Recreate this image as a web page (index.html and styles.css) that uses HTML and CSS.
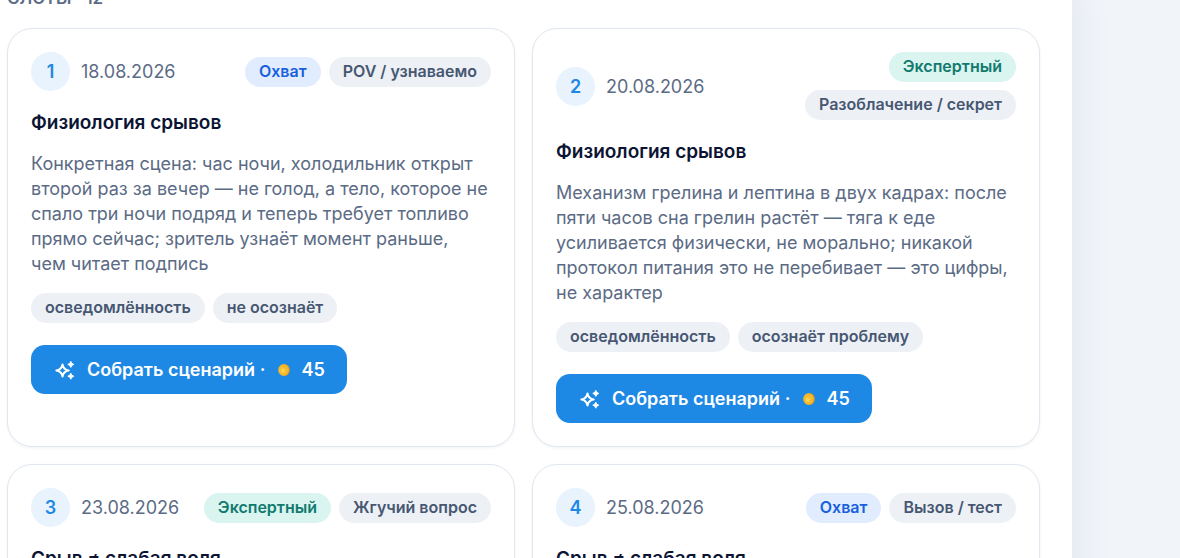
FILE: index.html
```html
<!DOCTYPE html>
<html lang="ru">
<head>
<meta charset="utf-8">
<meta name="viewport" content="width=device-width, initial-scale=1">
<title>Слоты</title>
<link rel="stylesheet" href="styles.css">
</head>
<body>
<svg class="sprite" aria-hidden="true">
  <symbol id="sparkles" viewBox="0 0 20 20">
    <path d="M7.5 4.6 Q8.4 9.6 13.6 10.5 Q8.4 11.4 7.5 16.4 Q6.6 11.4 1.4 10.5 Q6.6 9.6 7.5 4.6Z" fill="none" stroke="currentColor" stroke-width="2.2" stroke-linejoin="round"/>
    <path d="M15.8 1.4 L16.8 3.4 L18.8 4.4 L16.8 5.4 L15.8 7.4 L14.8 5.4 L12.8 4.4 L14.8 3.4Z M15.8 13.2 L16.8 15.2 L18.8 16.2 L16.8 17.2 L15.8 19.2 L14.8 17.2 L12.8 16.2 L14.8 15.2Z" fill="currentColor" stroke="currentColor" stroke-width="1" stroke-linejoin="round"/>
  </symbol>
  <symbol id="coin" viewBox="0 0 12 12">
    <ellipse cx="6.4" cy="6" rx="5.4" ry="6" fill="#e39a1b"/>
    <ellipse cx="5.4" cy="6" rx="5.2" ry="5.8" fill="#f5b92d"/>
    <path d="M5 2.8 L6 5 L8.2 5.6 L6.6 7.2 L6.8 9.4 L4.8 8.4 L2.8 9 L3.2 6.8 L2 5.2 L4.2 4.8Z" fill="#fbd04d"/>
  </symbol>
</svg>
<main class="panel">
  <h2 class="heading">СЛОТЫ · 12</h2>
  <div class="slots">
    <article class="card">
      <header class="card-head">
        <span class="number">1</span>
        <time class="date" datetime="2026-08-18">18.08.2026</time>
        <div class="tags tags-end"><span class="tag tag-blue">Охват</span><span class="tag">POV / узнаваемо</span></div>
      </header>
      <h3 class="title">Физиология срывов</h3>
      <p class="text">Конкретная сцена: час ночи, холодильник открыт второй раз за вечер — не голод, а тело, которое не спало три ночи подряд и теперь требует топливо прямо сейчас; зритель узнаёт момент раньше, чем&nbsp;читает подпись</p>
      <div class="tags"><span class="tag">осведомлённость</span><span class="tag">не осознаёт</span></div>
      <button class="build" type="button"><svg class="sparkles"><use href="#sparkles"/></svg><span>Собрать сценарий ·</span><svg class="coin"><use href="#coin"/></svg><span>45</span></button>
    </article>
    <article class="card">
      <header class="card-head">
        <span class="number">2</span>
        <time class="date" datetime="2026-08-20">20.08.2026</time>
        <div class="tags tags-end"><span class="tag tag-green">Экспертный</span><span class="tag">Разоблачение / секрет</span></div>
      </header>
      <h3 class="title">Физиология срывов</h3>
      <p class="text">Механизм грелина и лептина в двух кадрах: после пяти часов сна грелин растёт — тяга к еде усиливается физически, не морально; никакой протокол питания это не перебивает — это цифры, не характер</p>
      <div class="tags"><span class="tag">осведомлённость</span><span class="tag">осознаёт проблему</span></div>
      <button class="build" type="button"><svg class="sparkles"><use href="#sparkles"/></svg><span>Собрать сценарий ·</span><svg class="coin"><use href="#coin"/></svg><span>45</span></button>
    </article>
    <article class="card">
      <header class="card-head">
        <span class="number">3</span>
        <time class="date" datetime="2026-08-23">23.08.2026</time>
        <div class="tags tags-end"><span class="tag tag-green">Экспертный</span><span class="tag">Жгучий вопрос</span></div>
      </header>
      <h3 class="title">Срыв ≠ слабая воля</h3>
    </article>
    <article class="card">
      <header class="card-head">
        <span class="number">4</span>
        <time class="date" datetime="2026-08-25">25.08.2026</time>
        <div class="tags tags-end"><span class="tag tag-blue">Охват</span><span class="tag">Вызов / тест</span></div>
      </header>
      <h3 class="title">Срыв ≠ слабая воля</h3>
    </article>
  </div>
</main>
</body>
</html>
```
FILE: styles.css
```css
* { box-sizing: border-box; }

body {
  margin: 0;
  height: 100vh;
  overflow: hidden;
  background: #f1f4f9;
  color: #0b1533;
  font-family: Inter, "Noto Sans", sans-serif;
  font-size: 18px;
}

.sprite { display: none; }

.panel {
  margin-top: -14px;
  margin-right: 108px;
  padding: 0 32px 32px 7px;
  background: #fff;
  box-shadow: 0 0 40px rgba(30, 60, 90, 0.08);
}

.heading {
  margin: 0 0 18px;
  color: #5b6b85;
  font-size: 17px;
  font-weight: 600;
  line-height: 24px;
}

.slots {
  display: grid;
  grid-template-columns: repeat(2, minmax(0, 1fr));
  gap: 17px;
}

.card {
  display: flex;
  flex-direction: column;
  align-items: flex-start;
  padding: 23px;
  border: 1px solid #e0e7f0;
  border-radius: 25px;
  background: #fff;
  box-shadow: 0 1px 3px rgba(20, 40, 80, 0.06);
}

.card-head {
  display: flex;
  align-items: center;
  gap: 11px;
  width: 100%;
}

.number {
  display: grid;
  flex: none;
  place-items: center;
  width: 39px;
  height: 39px;
  border-radius: 50%;
  background: #e8f3fd;
  color: #1e88e5;
  font-weight: 600;
}

.date { color: #5b6b85; }

.tags {
  display: flex;
  flex-wrap: wrap;
  gap: 8px;
}

.tags-end {
  flex: 1;
  justify-content: flex-end;
}

.tag {
  padding: 2px 14px 3px;
  border-radius: 15px;
  background: #edf1f6;
  color: #475772;
  font-size: 16px;
  font-weight: 600;
  line-height: 25px;
  white-space: nowrap;
}

.tag-blue {
  background: #e1edff;
  color: #1860dc;
}

.tag-green {
  background: #daf4f0;
  color: #117a6e;
}

.title {
  margin: 20px 0 16px;
  font-size: 19px;
  font-weight: 600;
  line-height: 24px;
}

.text {
  margin: 0 0 17px;
  color: #5b6b85;
  line-height: 25px;
}

.build {
  display: flex;
  align-items: center;
  margin-top: 22px;
  padding: 12px 22px;
  border: 0;
  border-radius: 14px;
  background: #1e88e5;
  color: #fff;
  font: 600 18px/25px Inter, "Noto Sans", sans-serif;
}

.sparkles {
  width: 20px;
  height: 20px;
  margin: 0 12px 0 2px;
}

.coin {
  width: 12px;
  height: 12px;
  margin: 0 11px 0 13px;
}
```
